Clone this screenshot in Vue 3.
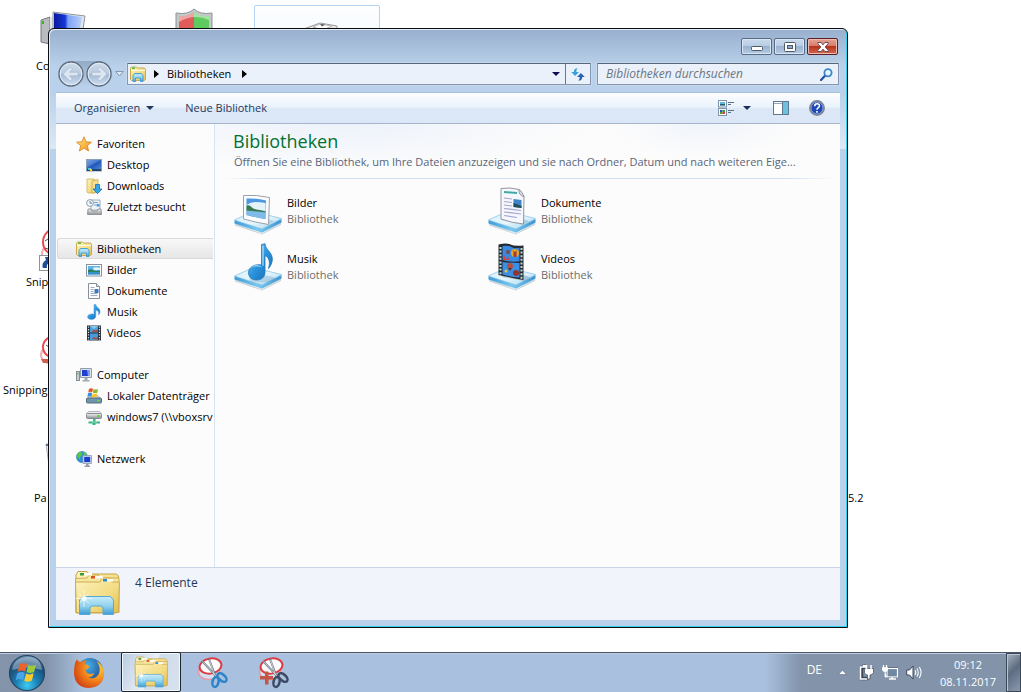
<script setup>
const tree = [
  {
    title: 'Favoriten', icon: 'star',
    items: [
      { name: 'Desktop', icon: 'screen' },
      { name: 'Downloads', icon: 'downloads' },
      { name: 'Zuletzt besucht', icon: 'recent' },
    ],
  },
  {
    title: 'Bibliotheken', icon: 'libraries', selected: true,
    items: [
      { name: 'Bilder', icon: 'pictures' },
      { name: 'Dokumente', icon: 'document' },
      { name: 'Musik', icon: 'music' },
      { name: 'Videos', icon: 'video' },
    ],
  },
  {
    title: 'Computer', icon: 'computer',
    items: [
      { name: 'Lokaler Datenträger', icon: 'disk' },
      { name: 'windows7 (\\\\vboxsrv', icon: 'netdrive' },
    ],
  },
  { title: 'Netzwerk', icon: 'network', items: [] },
]
const libraries = [
  { name: 'Bilder', icon: 'big-pictures' },
  { name: 'Dokumente', icon: 'big-documents' },
  { name: 'Musik', icon: 'big-music' },
  { name: 'Videos', icon: 'big-videos' },
]
</script>

<template>
  <svg class="sprite" aria-hidden="true">
    <defs>
      <linearGradient id="g-folder" x1="0" y1="0" x2="1" y2="1">
        <stop offset="0" stop-color="#fdf3bf" /><stop offset=".6" stop-color="#f3dc84" /><stop offset="1" stop-color="#e2bd4c" />
      </linearGradient>
      <linearGradient id="g-stand" x1="0" y1="0" x2="0" y2="1">
        <stop offset="0" stop-color="#c9ecf8" /><stop offset=".55" stop-color="#8fd0ee" /><stop offset="1" stop-color="#3d9cd6" />
      </linearGradient>
      <linearGradient id="g-star" x1="0" y1="0" x2="1" y2="1">
        <stop offset="0" stop-color="#fff07a" /><stop offset="1" stop-color="#f28a1c" />
      </linearGradient>
      <linearGradient id="g-blue" x1="0" y1="0" x2="1" y2="1">
        <stop offset="0" stop-color="#6fa0e6" /><stop offset=".5" stop-color="#2258b8" /><stop offset="1" stop-color="#5b94e0" />
      </linearGradient>
      <linearGradient id="g-screen" x1="0" y1="0" x2="1" y2="0">
        <stop offset="0" stop-color="#0b1a9c" /><stop offset=".4" stop-color="#1637d8" /><stop offset=".5" stop-color="#7ea2f6" /><stop offset="1" stop-color="#b9d0fb" />
      </linearGradient>
      <linearGradient id="g-note" x1="0" y1="0" x2="1" y2="1">
        <stop offset="0" stop-color="#8ed2f6" /><stop offset=".5" stop-color="#2b93dc" /><stop offset="1" stop-color="#1668b4" />
      </linearGradient>
      <linearGradient id="g-sky" x1="0" y1="0" x2="0" y2="1">
        <stop offset="0" stop-color="#3f8fe0" /><stop offset=".5" stop-color="#d4ebf8" /><stop offset=".55" stop-color="#3f8a57" /><stop offset="1" stop-color="#8fc4ea" />
      </linearGradient>
      <linearGradient id="g-grey" x1="0" y1="0" x2="0" y2="1">
        <stop offset="0" stop-color="#f4f4f4" /><stop offset="1" stop-color="#8c9196" />
      </linearGradient>
      <linearGradient id="g-plate" x1="0" y1="0" x2="1" y2="1">
        <stop offset="0" stop-color="#d3eefb" /><stop offset=".5" stop-color="#e9f6fc" /><stop offset="1" stop-color="#a4d6f2" />
      </linearGradient>
      <linearGradient id="g-edge" x1="0" y1="0" x2="1" y2="0">
        <stop offset="0" stop-color="#3d9cd8" /><stop offset=".5" stop-color="#7cc8ee" /><stop offset="1" stop-color="#3a95d2" />
      </linearGradient>
      <radialGradient id="g-orb" cx=".5" cy=".85" r=".9">
        <stop offset="0" stop-color="#3ecbf2" /><stop offset=".35" stop-color="#1c7fb4" /><stop offset=".7" stop-color="#1c4c78" /><stop offset="1" stop-color="#7fa3c2" />
      </radialGradient>
      <radialGradient id="g-fox" cx=".75" cy=".3" r=".9">
        <stop offset="0" stop-color="#ffd83a" /><stop offset=".45" stop-color="#f58a1c" /><stop offset="1" stop-color="#c9320f" />
      </radialGradient>
      <radialGradient id="g-globe" cx=".4" cy=".3" r=".8">
        <stop offset="0" stop-color="#49b4ea" /><stop offset="1" stop-color="#17357e" />
      </radialGradient>
      <linearGradient id="g-nav" x1="0" y1="0" x2="0" y2="1">
        <stop offset="0" stop-color="#cfdcea" /><stop offset=".48" stop-color="#b9cbe0" /><stop offset=".52" stop-color="#a5bbd4" /><stop offset="1" stop-color="#cfe0f2" />
      </linearGradient>

      <symbol id="i-star" viewBox="0 0 16 16">
        <path d="M8 .8l2 5 5.400.4-4.100 3.500 1.300 5.300L8 12.100 3.400 15l1.300-5.300L.6 6.200 6 5.800z" fill="url(#g-star)" stroke="#dd8a28" stroke-width=".9" stroke-linejoin="round" />
      </symbol>
      <symbol id="i-screen" viewBox="0 0 16 16">
        <rect x=".5" y="2.500" width="15" height="11.500" fill="url(#g-blue)" stroke="#8ba0b8" />
        <path d="M1 3h14L1 10z" fill="#8db6ee" opacity=".3" />
        <rect x="1" y="12" width="14" height="2" fill="#27466e" /><rect x="2" y="11" width="3" height="2" fill="#49c7e8" /><rect x="4" y="12" width="2" height="2" fill="#f5d34a" />
      </symbol>
      <symbol id="i-downloads" viewBox="0 0 16 16">
        <path d="M1 1h7l1 1v13H2l-1-1z" fill="url(#g-folder)" stroke="#d2b154" stroke-width=".8" /><path d="M6 3l6-1.500V14l-6 1z" fill="#f4df92" stroke="#cfab4b" stroke-width=".8" />
        <path d="M9.500 6.500h4V11H16l-4.500 4.700L7 11h2.500z" fill="#35a6e6" stroke="#1c6db0" stroke-width=".8" />
      </symbol>
      <symbol id="i-recent" viewBox="0 0 16 16">
        <path d="M5 1h9v10H5z" fill="#eef3f8" stroke="#8e9aa6" stroke-width=".8" /><path d="M8 3.500h4M8 6h2" stroke="#7ba2c8" /><rect x="10.500" y="5" width="3" height="2.500" fill="#4b9bd6" />
        <path d="M2 10h3l1 2h5l1-2h3l.5 5.500h-14z" fill="url(#g-grey)" stroke="#82888e" stroke-width=".8" />
        <circle cx="4" cy="4" r="3.400" fill="#f5f9fc" stroke="#8e9cab" /><path d="M4 2v2.200h2" fill="none" stroke="#44617e" stroke-width=".8" />
      </symbol>
      <symbol id="i-libraries" viewBox="0 0 16 16">
        <path d="M.5 2.500L1.500 1h5l1 1h7l1 1.500v10l-1 1h-13l-1-1z" fill="url(#g-folder)" stroke="#cba94c" />
        <rect x="2" y="1.500" width="3" height="1.500" fill="#56bb3b" /><path d="M1 4.500h14" stroke="#fffbe0" />
        <path d="M3 15.500v-6l1.500-2h7l1.500 2v6h-2.500v-3.500h-5v3.500z" fill="url(#g-stand)" stroke="#3c9ad0" stroke-width=".9" />
      </symbol>
      <symbol id="i-pictures" viewBox="0 0 16 16">
        <rect x=".5" y="2.500" width="15" height="11.500" fill="#fff" stroke="#8492a2" /><rect x="2" y="4" width="12" height="8.500" fill="#5fb4e8" />
        <path d="M2 8q3-1.500 5 0t7 .5v2H2z" fill="#2f7f5d" /><path d="M7 6q3-1.500 7 0v2H8z" fill="#e5f4fb" /><path d="M2 10.500h12v2H2z" fill="#348ed1" />
      </symbol>
      <symbol id="i-document" viewBox="0 0 16 16">
        <path d="M2.500.5h8l3 3v12h-11z" fill="#fff" stroke="#85909d" /><path d="M10.500.5v3h3" fill="#dde6ef" stroke="#85909d" />
        <path d="M4.500 4.500h4M4.500 6.500h3M4.500 8.500h3M4.500 10.500h7M4.500 12.500h7" stroke="#a4a9c4" /><rect x="8.500" y="6" width="4" height="4" fill="#3a78c4" />
      </symbol>
      <symbol id="i-music" viewBox="0 0 16 16">
        <path d="M8 .5h1.800c.3 3 4.700 3.500 4.200 7.500-.2 1.500-1 2.500-1.500 3 .8-3-.3-4-2.700-5v6c0 2.200-1.800 3.500-4.300 3.500S1.500 14.300 1.500 12.800c0-2 3.500-3.600 6.500-2.600z" fill="url(#g-note)" stroke="#4f9fd8" stroke-width=".5" />
      </symbol>
      <symbol id="i-video" viewBox="0 0 16 16">
        <rect x="1" y=".5" width="14" height="15" fill="#2a2f38" /><rect x="4" y="1" width="8" height="6.500" fill="#4d9fe0" /><rect x="4" y="8.500" width="8" height="6.500" fill="#4a9ade" />
        <path d="M6 7q1-3 2.500-2t3.500-1v3zM6 14q2-3 3-1.500t3-1.500v3.500z" fill="#a2503a" /><path d="M4 1l4 3 4-3z" fill="#87c8ec" />
        <path d="M2.500 1.500v14M13.500 1.500v14" stroke="#d8e3e4" stroke-width="1.200" stroke-dasharray="1.300 1.300" />
      </symbol>
      <symbol id="i-computer" viewBox="0 0 16 16">
        <rect x=".5" y="4.500" width="3" height="9" fill="#c9cdd2" stroke="#868c93" /><rect x="1" y="6" width="1.500" height="1.500" fill="#5acb34" />
        <path d="M4.500 1.500h11v9h-11z" fill="#dce3ec" stroke="#929dab" /><path d="M6 3h8v6H6z" fill="#1f41cf" /><path d="M11 3h3v6h-2z" fill="#7d9df0" /><path d="M8.500 11h3v2h2v1.500h-7V13h2z" fill="#a2a9b1" />
      </symbol>
      <symbol id="i-disk" viewBox="0 0 16 16">
        <path d="M2 10l2-2.500h8l2 2.500z" fill="#d5dde4" stroke="#8f9aa3" stroke-width=".6" /><rect x=".5" y="10" width="15" height="5" rx="1" fill="#6e95ab" stroke="#59717f" /><rect x="11.500" y="12" width="2" height="1.500" fill="#65e33c" />
        <path d="M3 .8q2-1.200 4 0L6.300 4.300q-2-1-4 0z" fill="#ea5422" /><path d="M7.600 1.100q2.200 1 4.400 0L11.300 4.700q-2.200.8-4.400 0z" fill="#88b82c" /><path d="M2.100 5q2-1 4 0L5.400 8.700q-2-1-4 0z" fill="#3b8cd8" /><path d="M6.700 5.400q2.200.9 4.400 0l-.7 3.500q-2.200.8-4.400 0z" fill="#fbc322" />
      </symbol>
      <symbol id="i-netdrive" viewBox="0 0 16 16">
        <path d="M.5 5L2.500 2.500h11L15.500 5z" fill="#f0f2f4" stroke="#a0a6ac" stroke-width=".8" /><rect x=".5" y="4.500" width="15" height="5" rx="1" fill="url(#g-grey)" stroke="#868b90" /><rect x="11.500" y="6" width="2" height="2" fill="#4fcb2f" />
        <path d="M7 10h2.500v2.500H14v2H9.500V16H6.500v-1.500H2.500v-2H7z" fill="#38b487" /><path d="M6 13h5" stroke="#8ae6c1" />
      </symbol>
      <symbol id="i-network" viewBox="0 0 16 16">
        <circle cx="6" cy="6" r="5.500" fill="#2e8fdc" stroke="#2270ac" stroke-width=".6" /><path d="M2 2q3-2 4 0t-1 3-1 3-3-2zM7 1q3 0 4 3l-3 1z" fill="#59c644" />
        <path d="M7 4.500h8.500v8H7z" fill="#dde5ee" stroke="#8c98a6" stroke-width=".8" /><path d="M8.200 5.800h6.100v5.400H8.200z" fill="#1b3dcc" /><path d="M10 13h2.500v1.500H14V16H8.500v-1.500H10z" fill="#989fa8" />
      </symbol>

      <symbol id="plate" viewBox="0 0 48 48">
        <path d="M1 36.500L28 46.500 47 35.500V38L28 47.500 1 38.500z" fill="#9fb0bd" opacity=".5" />
        <path d="M.5 33L28 41.500 47.500 32v3.500L28 45.800.5 36.500z" fill="url(#g-edge)" />
        <path d="M.5 33L19 24.500 47.500 31.500 28 42z" fill="url(#g-plate)" stroke="#7ec1e6" stroke-width=".7" />
      </symbol>
      <symbol id="i-big-pictures" viewBox="0 0 48 48">
        <use href="#plate" /><path d="M12 32l22 6 6-4-25-7z" fill="#7ba8c4" opacity=".35" />
        <path d="M9.500 8.500Q22 7.500 35.500 10.500L34.500 37.500Q22 35.500 9.500 32z" fill="#fafbfc" stroke="#9aa3ac" />
        <path d="M12.500 11.500q10-.5 19.500 2l-.6 18.500Q22 30.500 12.500 28z" fill="#4b97e2" />
        <path d="M12.500 18q4-3 9-3t10 1v8l-19-2z" fill="#e4f2fa" /><path d="M12.500 18.500q3-1 5 1.500t8 3l6 1.500v1q-10 0-19-2z" fill="#3a7a4c" /><path d="M12.500 23.500q9 1 19 2v6.500Q22 30.500 12.500 28z" fill="#7fbbe9" />
      </symbol>
      <symbol id="i-big-documents" viewBox="0 0 48 48">
        <use href="#plate" /><path d="M13 33l22 5 6-4-24-7z" fill="#6f9fbe" opacity=".4" />
        <path d="M13 1.500q9-1.500 18 1l5 7-.5 27.500Q24 36 13 32z" fill="#f6f6fd" stroke="#92979f" /><path d="M31 2.500q-1 5 5 7.500-1-5-5-7.500z" fill="#d3dde6" stroke="#92979f" />
        <path d="M16 5l13 1" stroke="#3da9a4" stroke-width="2" /><path d="M16 11l8 1M16 14.500l8 1M16 18l8 1M16 21.500l17 2M16 25l17 2M16 28.500l13 2" stroke="#a6a5d0" stroke-width="1.200" />
        <path d="M25.500 12l8 1v8l-8-1z" fill="#3e83c9" /><path d="M25.500 16l8 3v2l-8-1z" fill="#234f56" />
      </symbol>
      <symbol id="i-big-music" viewBox="0 0 48 48">
        <use href="#plate" /><ellipse cx="28" cy="36" rx="13" ry="3.500" fill="#5e94b8" opacity=".3" />
        <path d="M27.500 1.500l3.500-.8c.5 6.500 8 8.500 7.300 16.500-.4 3.500-2 6.300-3.800 8.300 2-7 .5-11-3.500-13v17c0 4.500-3.500 7.500-8.500 7.500-4.800 0-8-3-8-7.500 0-5.500 7-9 13-7.500z" fill="url(#g-note)" stroke="#2078ba" stroke-width=".8" />
        <path d="M28.500 3l1-.3v20h-1z" fill="#c7edff" /><path d="M16.500 25q6-6 12-.5-7-2-12 .5z" fill="#b9e6fb" opacity=".65" />
      </symbol>
      <symbol id="i-big-videos" viewBox="0 0 48 48">
        <use href="#plate" /><path d="M14 34l22 4 6-4-24-7z" fill="#6a8ba2" opacity=".4" />
        <path d="M10.500 1.500q8-2 12 0t13 1v34.500q-10-2-25-5z" fill="#262a30" />
        <path d="M14.500 3q6-1 9 1t8 .8v13.500q-9 1-17-1z" fill="#3989e2" /><path d="M14.500 19q8 1 17 1v14.500q-9-.5-17-3z" fill="#3a90e4" />
        <circle cx="27" cy="10" r="4" fill="#e7a42d" /><path d="M25.500 6.500q1.500 5 3 0v7q-1.500 1-3 0z" fill="#a33a31" /><circle cx="20" cy="9" r="2" fill="#7f4a4a" /><path d="M15 17l1-5 2 5 2-4 1 4z" fill="#df3d2b" /><circle cx="22" cy="23" r="3" fill="#b2503f" /><path d="M20 25h4l-2 3z" fill="#5c3030" /><circle cx="28" cy="30" r="3" fill="#94342e" /><circle cx="18" cy="28" r="1.500" fill="#f0c539" />
        <path d="M12.500 4v28.500M33.500 5v31.500" stroke="#b8dada" stroke-width="2" stroke-dasharray="2 1.600" />
      </symbol>

      <symbol id="i-folder" viewBox="0 0 48 48">
        <path d="M3 6l2-3.500h9L16 5h27.500l2 2v35l-2 2H3z" fill="url(#g-folder)" stroke="#c5a346" />
        <path d="M2.500 9.500L14 9l2-3h9l2 3h19v34.500h-43z" fill="#f7e6a0" stroke="#cdad52" /><path d="M2.500 13H27l2-4h8l2 4h7.500l-1 30.500h-42z" fill="url(#g-folder)" stroke="#cdad52" />
        <rect x="7" y="4" width="4" height="2.500" fill="#3a9c36" /><rect x="11" y="4" width="8" height="2.500" fill="#fffef4" /><rect x="18" y="7" width="4" height="2.500" fill="#e04d23" /><rect x="22" y="7" width="8" height="2.500" fill="#fffef4" /><rect x="30" y="10" width="4" height="2.500" fill="#2c8cd4" /><rect x="34" y="10" width="6" height="2.500" fill="#fffef4" />
        <path d="M6.500 45.500V31l3-3.500h28l3 3.500v14.500H30V39l-1.500-2h-10L17 39v6.500z" fill="url(#g-stand)" stroke="#55abd6" />
        <path d="M11 21v17M2.500 29.500h17M6 24.500l10 10M16 24.500l-10 10" stroke="#fff" opacity=".8" stroke-width=".8" /><circle cx="11" cy="29.500" r="2.500" fill="#fff" opacity=".85" />
      </symbol>
      <symbol id="i-snip" viewBox="0 0 32 32">
        <ellipse cx="12" cy="15" rx="10.500" ry="7.500" fill="#fff" fill-opacity=".5" stroke="#e59aa4" stroke-width="1.500" />
        <ellipse cx="13.500" cy="9" rx="11" ry="7.500" fill="#fdfdfe" stroke="#dd3b43" stroke-width="2" transform="rotate(-10 13.500 9)" />
        <path d="M5 4l15 16M12 2l6 16" stroke="#6f7882" stroke-width="2" /><path d="M5.500 4.500l14 15M12.500 3l5 15" stroke="#e2e6ea" stroke-width=".8" />
        <ellipse cx="18.500" cy="25" rx="3" ry="5" fill="none" stroke="currentColor" stroke-width="2.500" transform="rotate(12 18.500 25)" />
        <ellipse cx="25" cy="20.500" rx="3" ry="5.500" fill="none" stroke="currentColor" stroke-width="2.500" transform="rotate(-48 25 20.500)" />
      </symbol>
    </defs>
  </svg>

  <div class="desktop">
    <main class="space">
      <div class="shortcut pc">
        <svg width="50" height="36" viewBox="0 0 50 36"><path d="M1 9l9-3v27l-9-2z" fill="#b8bcc0" stroke="#74787c" /><path d="M10 6l5-1v27l-5 2z" fill="#e4e6e8" /><rect x="2" y="10" width="2" height="3" fill="#3cb522" /><path d="M13 1l32 4-3 20-29 3z" fill="#dfe6ec" stroke="#8f979f" /><path d="M14 2l28 4-3 17-25 3z" fill="url(#g-screen)" /></svg>
      </div>
      <span class="caption c-pc">Co</span>
      <svg class="shortcut shield" width="38" height="40" viewBox="0 0 38 40"><path d="M19 1q6 6 18 4v15q-3 13-18 19Q4 33 1 20V5q12 2 18-4z" fill="#c4c8c8" stroke="#8c9292" /><path d="M19 4q-6 5-15 4v12h15z" fill="#e15b5b" /><path d="M19 4q6 5 15 4v12H19z" fill="#5fcb5f" /><path d="M4 8q9 1 15-4 6 5 15 4v4q-15-7-30 2z" fill="#fff" opacity=".45" /></svg>
      <div class="shortcut focus">
        <svg width="40" height="16" viewBox="0 0 40 16"><path d="M1 9l19-7 17 3v5l-17 6z" fill="#e8e8e8" stroke="#9a9a9a" /><path d="M13 6l7-3 12 2-9 4z" fill="#fff" stroke="#b4b4b4" /><path d="M20 3l5 .5-3 2z" fill="#555" /></svg>
      </div>
      <svg class="shortcut s1" width="32" height="48" viewBox="0 0 32 48"><ellipse cx="15" cy="27" rx="12" ry="11" fill="#fff" stroke="#f3aeb2" stroke-width="2" /><ellipse cx="16" cy="15" rx="12" ry="13" fill="#fff" stroke="#e84a50" stroke-width="2" /><path d="M6 14l3-2M6 21l3 1" stroke="#555" /><rect x=".5" y="28.500" width="15" height="15" fill="#fff" stroke="#8d959e" /><path d="M4 41q-2-5 3-8l-1-3h7v6l-2-1q-4 2-3 6z" fill="#1d4f96" /></svg>
      <span class="caption c-s1">Snip</span>
      <svg class="shortcut s1 s2" width="32" height="32" viewBox="0 0 32 32"><ellipse cx="14" cy="20" rx="12" ry="9" fill="#fff" stroke="#f3aeb2" stroke-width="2" /><ellipse cx="16" cy="12" rx="12" ry="11" fill="#fff" stroke="#e84a50" stroke-width="2" /><path d="M2 24h14v4H4z" fill="#cf5f48" /><path d="M7 10l3 2" stroke="#555" /></svg>
      <span class="caption c-s2">Snipping</span>
      <svg class="shortcut bin" width="30" height="40" viewBox="0 0 30 40"><path d="M1 1h28l-5 36H6z" fill="#e9eef4" stroke="#a9b3bf" /><path d="M1 2h28" stroke="#66727f" stroke-width="2" /></svg>
      <span class="caption c-bin">Pa</span>
      <span class="caption c-ver">5.2</span>

      <section class="window" aria-label="Bibliotheken">
        <header class="titlebar">
          <button class="sys" aria-label="Minimieren"><svg width="12" height="6" viewBox="0 0 12 6"><rect x=".5" y=".5" width="11" height="4" rx="1" fill="#fff" stroke="#4f5a68" /></svg></button>
          <button class="sys" aria-label="Maximieren"><svg width="12" height="10" viewBox="0 0 12 10"><rect x=".5" y=".5" width="11" height="9" rx="1" fill="#fff" stroke="#4f5a68" /><rect x="3.500" y="3.500" width="5" height="3" fill="#8ea9c8" stroke="#4f5a68" /></svg></button>
          <button class="sys close" aria-label="Schließen"><svg width="12" height="10" viewBox="0 0 12 10"><path d="M.8.500h3.300L6 2.800 7.900.500h3.300v1.200L8.200 5l3 3.300v1.200H7.900L6 7.200 4.100 9.500H.8V8.300l3-3.300-3-3.300z" fill="#fff" stroke="#5a4048" stroke-width=".9" /></svg></button>
        </header>

        <nav class="navrow" aria-label="Adresse">
          <div class="travel">
            <button aria-label="Zurück"><svg width="26" height="26" viewBox="0 0 26 26"><circle cx="13" cy="13" r="12" fill="url(#g-nav)" stroke="#5d6b7c" stroke-width="1.300" /><circle cx="13" cy="13" r="10.800" fill="none" stroke="#e3edf7" /><path d="M5 13l7-7 2.500 2-3 3.200H20v3.600h-8.500l3 3.200-2.500 2z" fill="#dde7f1" stroke="#a7b9cc" stroke-width=".7" /></svg></button>
            <button aria-label="Vorwärts"><svg width="26" height="26" viewBox="0 0 26 26"><circle cx="13" cy="13" r="12" fill="url(#g-nav)" stroke="#5d6b7c" stroke-width="1.300" /><circle cx="13" cy="13" r="10.800" fill="none" stroke="#e3edf7" /><path d="M21 13l-7-7-2.500 2 3 3.200H6v3.600h8.500l-3 3.200 2.500 2z" fill="#dde7f1" stroke="#a7b9cc" stroke-width=".7" /></svg></button>
          </div>
          <button class="recent" aria-label="Letzte Seiten"><svg width="9" height="6" viewBox="0 0 9 6"><path d="M.7.500h7.600L4.500 5z" fill="#dce8f5" stroke="#8499b1" /></svg></button>
          <div class="address">
            <svg class="ic" width="16" height="16"><use href="#i-libraries" /></svg>
            <svg class="chev" width="5" height="8" viewBox="0 0 5 8"><path d="M0 0l5 4-5 4z" /></svg>
            <button class="crumb">Bibliotheken</button>
            <svg class="chev" width="5" height="8" viewBox="0 0 5 8"><path d="M0 0l5 4-5 4z" /></svg>
            <button class="history" aria-label="Vorherige Orte"><svg width="8" height="4" viewBox="0 0 8 4"><path d="M0 0h8L4 4z" fill="#0c0c54" /></svg></button>
            <button class="refresh" aria-label="Aktualisieren"><svg width="14" height="13" viewBox="0 0 14 13"><path d="M6.500.300Q2.800.5 2.800 4H.2l3.900 4L8 4H5.300Q5.300 1.500 6.500.300z" fill="#37a0dd" /><path d="M7.500 12.800q3.700-.2 3.700-3.900h2.600L9.900 4.900 6 8.900h2.700q0 2.600-1.200 3.900z" fill="#2a63b0" /></svg></button>
          </div>
          <label class="search">
            <input type="text" placeholder="Bibliotheken durchsuchen" aria-label="Bibliotheken durchsuchen" />
            <svg width="13" height="13" viewBox="0 0 13 13"><path d="M1 12l4-4.200" stroke="#254f9b" stroke-width="2.200" stroke-linecap="round" /><circle cx="8" cy="4.800" r="3.600" fill="#e8f4fd" stroke="#3b86cd" stroke-width="1.800" /></svg>
          </label>
        </nav>

        <div class="client">
          <div class="toolbar">
            <button>Organisieren<svg width="8" height="4" viewBox="0 0 8 4"><path d="M0 0h8L4 4z" fill="#1e395b" /></svg></button>
            <button class="new">Neue Bibliothek</button>
            <button class="view" aria-label="Ansicht ändern"><svg width="16" height="16" viewBox="0 0 16 16"><rect x=".5" y=".5" width="8" height="6.500" fill="#fff" stroke="#7f93ab" /><rect x="2" y="2" width="5" height="3.500" fill="#62b6d8" /><rect x="2" y="4" width="5" height="1.500" fill="#26606a" /><rect x=".5" y="8.500" width="8" height="7" fill="#fff" stroke="#7f93ab" /><rect x="2" y="10" width="2.500" height="2" fill="#2d4fc0" /><rect x="4.500" y="10" width="2.500" height="2" fill="#3da23e" /><rect x="2" y="12" width="2.500" height="2" fill="#3da23e" /><rect x="4.500" y="12" width="2.500" height="2" fill="#e04123" /><path d="M10 2.500h6M10 4.500h3M10 10.500h6M10 12.500h3" stroke="#5a6f8a" /></svg></button>
            <button class="drop" aria-label="Weitere Ansichten"><svg width="8" height="4" viewBox="0 0 8 4"><path d="M0 0h8L4 4z" fill="#14315c" /></svg></button>
            <button class="pane" aria-label="Vorschaufenster"><svg width="16" height="14" viewBox="0 0 16 14"><rect x=".5" y=".5" width="15" height="13" fill="#fff" stroke="#5f7892" /><path d="M1 2.500h9" stroke="#90a8c0" /><rect x="10" y="1" width="5" height="12" fill="#6fc0dd" /><path d="M9.500 1v12" stroke="#5f7892" /></svg></button>
            <button class="help" aria-label="Hilfe"><svg width="16" height="16" viewBox="0 0 16 16"><circle cx="8" cy="8" r="7.200" fill="#1e48b4" stroke="#7f868f" stroke-width="1.500" /><circle cx="8" cy="8" r="6" fill="none" stroke="#cfd9ea" stroke-width=".6" /><path d="M5.700 6.200q0-2.400 2.400-2.400t2.300 2q0 1.200-1.200 1.900T8 9.700M8 11v1.700" fill="none" stroke="#fff" stroke-width="1.600" /></svg></button>
          </div>

          <div class="body">
            <nav class="tree" aria-label="Navigationsbereich">
              <ul v-for="group in tree" :key="group.title">
                <li><a href="#" :class="{ selected: group.selected }"><svg class="ic" width="16" height="16"><use :href="'#i-' + group.icon" /></svg>{{ group.title }}</a></li>
                <li v-for="item in group.items" :key="item.name"><a href="#" class="child"><svg class="ic" width="16" height="16"><use :href="'#i-' + item.icon" /></svg>{{ item.name }}</a></li>
              </ul>
            </nav>
            <section class="content">
              <header class="lead">
                <h1>Bibliotheken</h1>
                <p>Öffnen Sie eine Bibliothek, um Ihre Dateien anzuzeigen und sie nach Ordner, Datum und nach weiteren Eige...</p>
              </header>
              <ul class="libs">
                <li v-for="lib in libraries" :key="lib.name">
                  <svg width="48" height="48"><use :href="'#i-' + lib.icon" /></svg>
                  <div><strong>{{ lib.name }}</strong><span>Bibliothek</span></div>
                </li>
              </ul>
            </section>
          </div>

          <footer class="details">
            <svg width="48" height="48"><use href="#i-folder" /></svg>
            <span>4 Elemente</span>
          </footer>
        </div>
      </section>
    </main>

    <footer class="taskbar">
      <button class="task start" aria-label="Start">
        <svg width="38" height="38" viewBox="0 0 38 38"><circle cx="19" cy="19" r="17.500" fill="url(#g-orb)" stroke="#254562" stroke-width="1.200" /><path d="M4 16Q6 4 19 3t15 13q-14-5-30 0z" fill="#fff" opacity=".35" /><path d="M11.500 10.500q4-2.500 7.500-.3l-1.800 7.300q-3.600-2-7.500.2z" fill="#f0602a" /><path d="M20.300 10.900q3.800 2 7.700-.2l-1.900 7.300q-3.800 2-7.600.1z" fill="#9cca3c" /><path d="M9.300 19.200q4-2.300 7.500-.3L15 26q-3.600-2-7.400.2z" fill="#4aa4e8" /><path d="M18.100 19.500q3.800 2 7.600-.2L23.900 26.500q-3.800 2.200-7.600.2z" fill="#fdc92e" /></svg>
      </button>
      <button class="task fox" aria-label="Firefox">
        <svg width="32" height="32" viewBox="0 0 32 32"><circle cx="17" cy="14" r="13" fill="url(#g-globe)" /><path d="M2 6q1-2 1.500-3.500Q6 5 8 5q3-2 6-2-2 1.500-2.500 4 3 .5 5 2.500-1 2.500-4 3 .5 4 4.500 4.500 2 0 4-1-1 4-5.500 4.500 7 2.500 10.500-4 2.500-6-2.500-12.500 7 3.500 7.500 12.500Q30.500 30 16 31 2 30.500 1 16.500 1 10 2 6z" fill="url(#g-fox)" /></svg>
      </button>
      <button class="task active" aria-label="Bibliotheken"><svg width="34" height="32" viewBox="1 1 46 46" preserveAspectRatio="none"><use href="#i-folder" width="48" height="48" /></svg></button>
      <button class="task snip" aria-label="Snipping Tool"><svg width="32" height="32"><use href="#i-snip" /></svg></button>
      <button class="task snip plus" aria-label="Snipping Tool Plus"><svg width="32" height="32" viewBox="0 0 32 32"><use href="#i-snip" width="32" height="32" /><path d="M2 19h13v3.500H2zM7 14.500h3.500v13H7z" fill="#c25648" /></svg></button>
      <div class="tray">
        <span class="lang">DE</span>
        <svg class="up" width="9" height="5" viewBox="0 0 9 5"><path d="M4.500.3L8.700 4.500H.3z" fill="#fff" stroke="#4a5a70" stroke-width=".5" /></svg>
        <svg class="t" width="16" height="17" viewBox="0 0 16 17"><path d="M7 3.500H3.500v11h6M5 1.500h3" fill="none" stroke="#3a4656" stroke-width="3.500" /><path d="M8 3H2.500v12H9M5 1.500h3" fill="none" stroke="#fff" stroke-width="1.600" /><path d="M6.500 4.500h9v4q-1 2.500-3.500 2.500v4H9.500v-4Q7 11 6.500 8.500z" fill="#fff" stroke="#3a4656" stroke-width=".7" /><path d="M8.500 1v4M13 1v4" stroke="#fff" stroke-width="1.500" /></svg>
        <svg class="t" width="16" height="15" viewBox="0 0 16 15"><rect x="5" y="3.500" width="10.500" height="8.500" fill="#61758f" stroke="#2f3b4b" stroke-width="2" /><rect x="5" y="3.500" width="10.500" height="8.500" fill="#7188a3" stroke="#fff" stroke-width="1.200" /><path d="M7 14h7M10.300 12v2" stroke="#fff" stroke-width="1.500" /><path d="M.5 2.500h5v2.500l-1.200 1.500H1.700L.5 5zM3 6.500v5.500H5" fill="#fff" stroke="#fff" stroke-width=".8" /><path d="M1.500 0v3M4.500 0v3" stroke="#fff" stroke-width="1.200" /></svg>
        <svg class="t" width="16" height="15" viewBox="0 0 16 15"><path d="M.7 5h2.800L7 1v13L3.500 10H.7z" fill="#fff" stroke="#3c4859" /><path d="M9 5q1.500 2.500 0 5M11 3.500q2.500 4 0 8M13.300 2q3.500 5.500 0 11" fill="none" stroke="#fff" stroke-width="1.100" /></svg>
        <time class="clock"><span>09:12</span><span>08.11.2017</span></time>
        <button class="peek" aria-label="Desktop anzeigen"></button>
      </div>
    </footer>
  </div>
</template>

<style>
html, body { height: 100%; background: #fff; }
#app { height: 100%; }
</style>

<style scoped>
.sprite { position: absolute; width: 0; height: 0; }
.desktop {
  display: flex; flex-direction: column; min-height: 100%; overflow: hidden;
  font-family: "Open Sans", "Noto Sans", sans-serif; font-size: 11px; line-height: 16px; color: #000;
}
button { margin: 0; padding: 0; border: 0; background: none; font: inherit; color: inherit; }
svg { display: block; flex: none; }
ul { list-style: none; margin: 0; padding: 0; }
a { color: inherit; text-decoration: none; }

.space { position: relative; flex: 1; min-height: 600px; }
.shortcut, .caption { position: absolute; }
.pc { left: 40px; top: 11px; }
.c-pc { left: 36px; top: 58px; }
.shield { left: 175px; top: 8px; }
.focus { left: 254px; top: 5px; width: 124px; height: 60px; border: 1px solid #b5d3f2; border-radius: 2px; background: linear-gradient(#fdfeff, #eef5fd); }
.focus svg { margin: 15px 0 0 45px; }
.s1 { left: 39px; top: 227px; }
.s2 { top: 335px; }
.bin { left: 45px; top: 443px; }
.c-s1 { left: 26px; top: 274px; }
.c-s2 { left: 3px; top: 382px; }
.c-bin { left: 34px; top: 490px; }
.c-ver { left: calc(100% - 173px); top: 490px; }

.window {
  position: absolute; left: 48px; right: 173px; top: 28px; bottom: 24px; box-sizing: border-box;
  display: flex; flex-direction: column; padding: 0 7px 7px;
  border: 1px solid #0b0d10; border-radius: 6px 6px 0 0;
  box-shadow: inset -1px -1px #2fd3ee, inset 1px 1px #e4eef8;
  background:
    linear-gradient(#b9d1ea, #dce9f6) left 0 top 64px / 7px 56px no-repeat,
    linear-gradient(#b9d1ea, #dce9f6) right 0 top 64px / 7px 56px no-repeat,
    linear-gradient(#98b0ce, #b9d1ea 38px);
}
.titlebar { display: flex; justify-content: flex-end; gap: 2px; height: 34px; box-sizing: border-box; padding: 9px 2px 0 0; }
.sys {
  display: flex; align-items: center; justify-content: center; width: 31px; height: 17px; border: 1px solid #586b85; border-radius: 2px;
  background: linear-gradient(#cadaec, #b7cce4 48%, #9ab3d0 50%, #b5cbe4); box-shadow: inset 0 0 0 1px #d8e5f3;
}
.sys:first-child svg { margin-top: 4px; }
.close { border-color: #5c1f28; background: linear-gradient(#e5a396, #d6796a 48%, #b8331c 50%, #d26a52); box-shadow: inset 0 0 0 1px #eebbb0; }

.navrow { display: flex; align-items: center; height: 22px; margin: 0 1px 0 2px; }
.travel { display: flex; gap: 2px; border-radius: 13px; background: linear-gradient(#94abc6, #aac1dc 60%, transparent); }
.recent { width: 15px; display: flex; justify-content: center; }
.address, .search {
  display: flex; align-items: center; box-sizing: border-box; height: 22px;
  border: 1px solid #8497ae; border-top-color: #55667b; border-radius: 1px; background: #eaf1fa; box-shadow: 0 0 0 1px #c6d8ec;
}
.address { flex: 1; padding-left: 2px; }
.chev { margin: 0 8px; }
.crumb { margin-right: 3px; }
.history { margin-left: auto; padding: 0 5px; }
.refresh { align-self: stretch; width: 25px; display: flex; align-items: center; justify-content: center; border-left: 1px solid #66788e; }
.search { flex: 0 1 242px; margin-left: 6px; padding: 0 5px 0 8px; }
.search input { flex: 1; min-width: 0; padding: 0; border: 0; outline: 0; background: none; font: inherit; font-size: 12px; color: #000; }
.search input::placeholder { font-style: italic; color: #6d7680; opacity: 1; }

.client { flex: 1; min-height: 0; display: flex; flex-direction: column; margin-top: 7px; border-top: 1px solid #a8c0da; background: #fcfcfc; }
.toolbar {
  display: flex; align-items: center; height: 31px; box-sizing: border-box; padding: 0 15px 0 18px; color: #1e395b;
  background: linear-gradient(#fdfeff, #e9f2fb 48%, #dce8f6 52%, #dbe7f6); border-bottom: 1px solid #a5b6cc;
}
.toolbar button { display: flex; align-items: center; gap: 6px; }
.toolbar .new { margin-left: 31px; }
.toolbar .view { margin-left: auto; }
.toolbar .drop { margin-left: 9px; }
.toolbar .pane { margin-left: 22px; }
.toolbar .help { margin-left: 20px; }

.body { flex: 1; min-height: 0; display: flex; }
.tree { flex: none; width: 158px; padding-top: 9px; border-right: 1px solid #d6e5f5; overflow: hidden; }
.tree ul + ul { margin-top: 21px; }
.tree a { display: flex; align-items: center; box-sizing: border-box; height: 21px; margin-left: 1px; padding-left: 18px; border: 1px solid transparent; border-right: 0; white-space: nowrap; }
.tree a.child { padding-left: 28px; }
.tree .ic { margin-right: 5px; }
.tree a.selected { border-color: #d9d9d9; border-radius: 3px 0 0 3px; background: linear-gradient(#f8f8f8, #e6e6e6); margin-right: 1px; }

.content {
  flex: 1; min-width: 0; padding: 0 4px 0 10px;
  background:
    radial-gradient(ellipse at 30% 0, #edf2fa, transparent 60%) 0 0 / 420px 56px no-repeat,
    radial-gradient(ellipse at 50% 0, #f0f4fa, transparent 60%) 380px 0 / 220px 40px no-repeat;
}
.lead {
  box-sizing: border-box; height: 55px; padding: 6px 20px 0 8px;
  background: linear-gradient(90deg, transparent, #d0e1f6 6%, #d0e1f6 92%, transparent) left bottom / 100% 1px no-repeat;
}
h1 { margin: 0; font-size: 18px; line-height: 22px; font-weight: 400; color: #007233; }
.lead p { margin: 2px 0 0 1px; color: #5a6478; white-space: nowrap; overflow: hidden; }
.libs { display: grid; grid-template-columns: 254px 254px; padding: 4px 0 0 9px; }
.libs li { display: flex; align-items: center; gap: 5px; height: 56px; }
.libs strong, .libs span { display: block; font-weight: 400; }
.libs span { color: #6d6d6d; }

.details { display: flex; gap: 14px; height: 53px; box-sizing: border-box; padding: 1px 17px 0; border-top: 1px solid #c9d5e4; background: #f1f5fb; color: #1e395b; font-size: 12px; }
.details span { margin-top: 6px; }

.taskbar {
  display: flex; height: 40px; box-sizing: border-box; border-top: 1px solid #4b5767; box-shadow: inset 0 1px #bccbdd;
  background: linear-gradient(90deg, #8293aa 0, #8394ab 46px, #a9c1de 84px, #a9c1de calc(100% - 256px), #8293aa calc(100% - 220px), #8293aa);
}
.task { display: flex; align-items: center; justify-content: center; width: 60px; }
.start { width: 54px; }
.fox { width: 67px; padding-left: 2px; }
.active { margin-top: -1px; border: 1px solid #20262e; border-radius: 2px; background: linear-gradient(115deg, #b8cbe2, #e9f0f7 50%, #cfdcea 52%, #d7e2ef); box-shadow: inset 0 0 0 1px #f2f7fb; }
.snip { margin-left: 2px; color: #2c84c8; }
.plus { color: #3c4a66; margin-left: 1px; }
.tray { display: flex; align-items: center; margin-left: auto; color: #fff; }
.lang { margin: -5px 16px 0 0; font-size: 12px; }
.up { margin-right: 11px; }
.t { margin-right: 8px; }
.clock { display: flex; flex-direction: column; align-items: center; width: 76px; }
.clock span { line-height: 17px; }
.peek { align-self: stretch; width: 15px; border: 1px solid #3b4858; background: linear-gradient(135deg, #a9b3bf, #5d6c80 45%, #8a99ad); box-shadow: inset 1px 1px #b9c5d3; }
</style>
